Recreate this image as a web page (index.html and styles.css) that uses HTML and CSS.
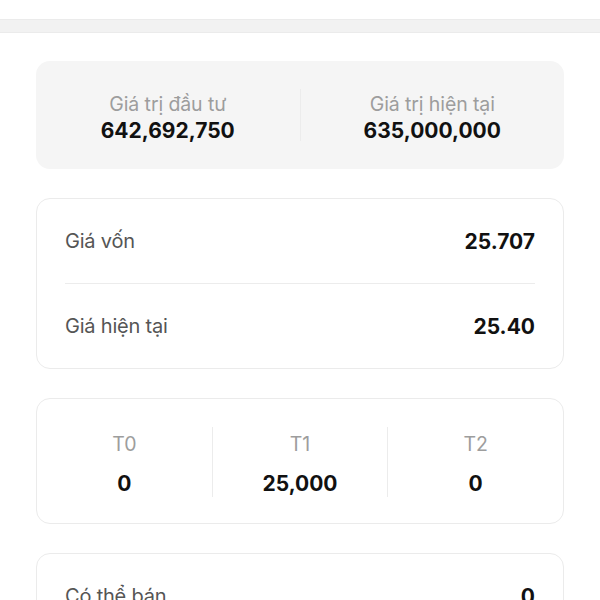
FILE: index.html
```html
<!DOCTYPE html>
<html lang="vi">
<head>
<meta charset="utf-8">
<link rel="stylesheet" href="styles.css">
</head>
<body>
<div class="topbar"></div>
<main class="content">
  <section class="card card-gray summary">
    <div class="sum-col">
      <div class="label">Giá trị đầu tư</div>
      <div class="value">642,692,750</div>
    </div>
    <div class="vdiv"></div>
    <div class="sum-col">
      <div class="label">Giá trị hiện tại</div>
      <div class="value">635,000,000</div>
    </div>
  </section>

  <section class="card card-white rows">
    <div class="row">
      <span class="row-label">Giá vốn</span>
      <span class="row-value">25.707</span>
    </div>
    <div class="hdiv"></div>
    <div class="row">
      <span class="row-label">Giá hiện tại</span>
      <span class="row-value">25.40</span>
    </div>
  </section>

  <section class="card card-white tcols">
    <div class="tcol">
      <div class="label">T0</div>
      <div class="value">0</div>
    </div>
    <div class="vdiv"></div>
    <div class="tcol">
      <div class="label">T1</div>
      <div class="value">25,000</div>
    </div>
    <div class="vdiv"></div>
    <div class="tcol">
      <div class="label">T2</div>
      <div class="value">0</div>
    </div>
  </section>

  <section class="card card-white rows">
    <div class="row">
      <span class="row-label">Có thể bán</span>
      <span class="row-value">0</span>
    </div>
  </section>
</main>
</body>
</html>
```

FILE: styles.css
```css
* { box-sizing: border-box; }
html, body { margin: 0; padding: 0; background: #fff; }
body {
  font-family: Inter, "Noto Sans", "Liberation Sans", sans-serif;
  color: #111;
  overflow: hidden;
}
.topbar {
  margin-top: 19px;
  height: 14px;
  background: #f2f2f2;
  border-top: 1px solid #ebebeb;
  border-bottom: 1px solid #ebebeb;
}
.content {
  padding: 28px 36px 0;
  display: flex;
  flex-direction: column;
  gap: 29px;
}
.card { border-radius: 14px; }
.card-gray { background: #f5f5f5; }
.card-white { background: #fff; border: 1px solid #ebebeb; }

.summary {
  height: 108px;
  display: flex;
  align-items: center;
  padding-top: 4px;
}
.sum-col {
  flex: 1;
  display: flex;
  flex-direction: column;
  align-items: center;
  gap: 1px;
}
.label {
  font-size: 19.5px;
  color: #9d9d9d;
  line-height: 26px;
  letter-spacing: -0.1px;
}
.value {
  font-size: 21px;
  font-weight: 700;
  color: #111;
  line-height: 26px;
}
.vdiv {
  width: 1px;
  align-self: stretch;
  background: #ececec;
}
.summary .vdiv { margin: 24px 0 28px; }

.rows { padding: 0 28px; }
.row {
  height: 84px;
  display: flex;
  align-items: center;
  justify-content: space-between;
}
.row-label { font-size: 20px; color: #555; letter-spacing: -0.2px; }
.row-value { font-size: 21px; font-weight: 700; color: #111; }
.hdiv { height: 1px; background: #ececec; }

.tcols {
  height: 126px;
  display: flex;
  align-items: center;
  padding-top: 6px;
}
.tcols .vdiv { margin: 22px 0 26px; }
.tcol {
  flex: 1;
  display: flex;
  flex-direction: column;
  align-items: center;
  gap: 14px;
}
```
